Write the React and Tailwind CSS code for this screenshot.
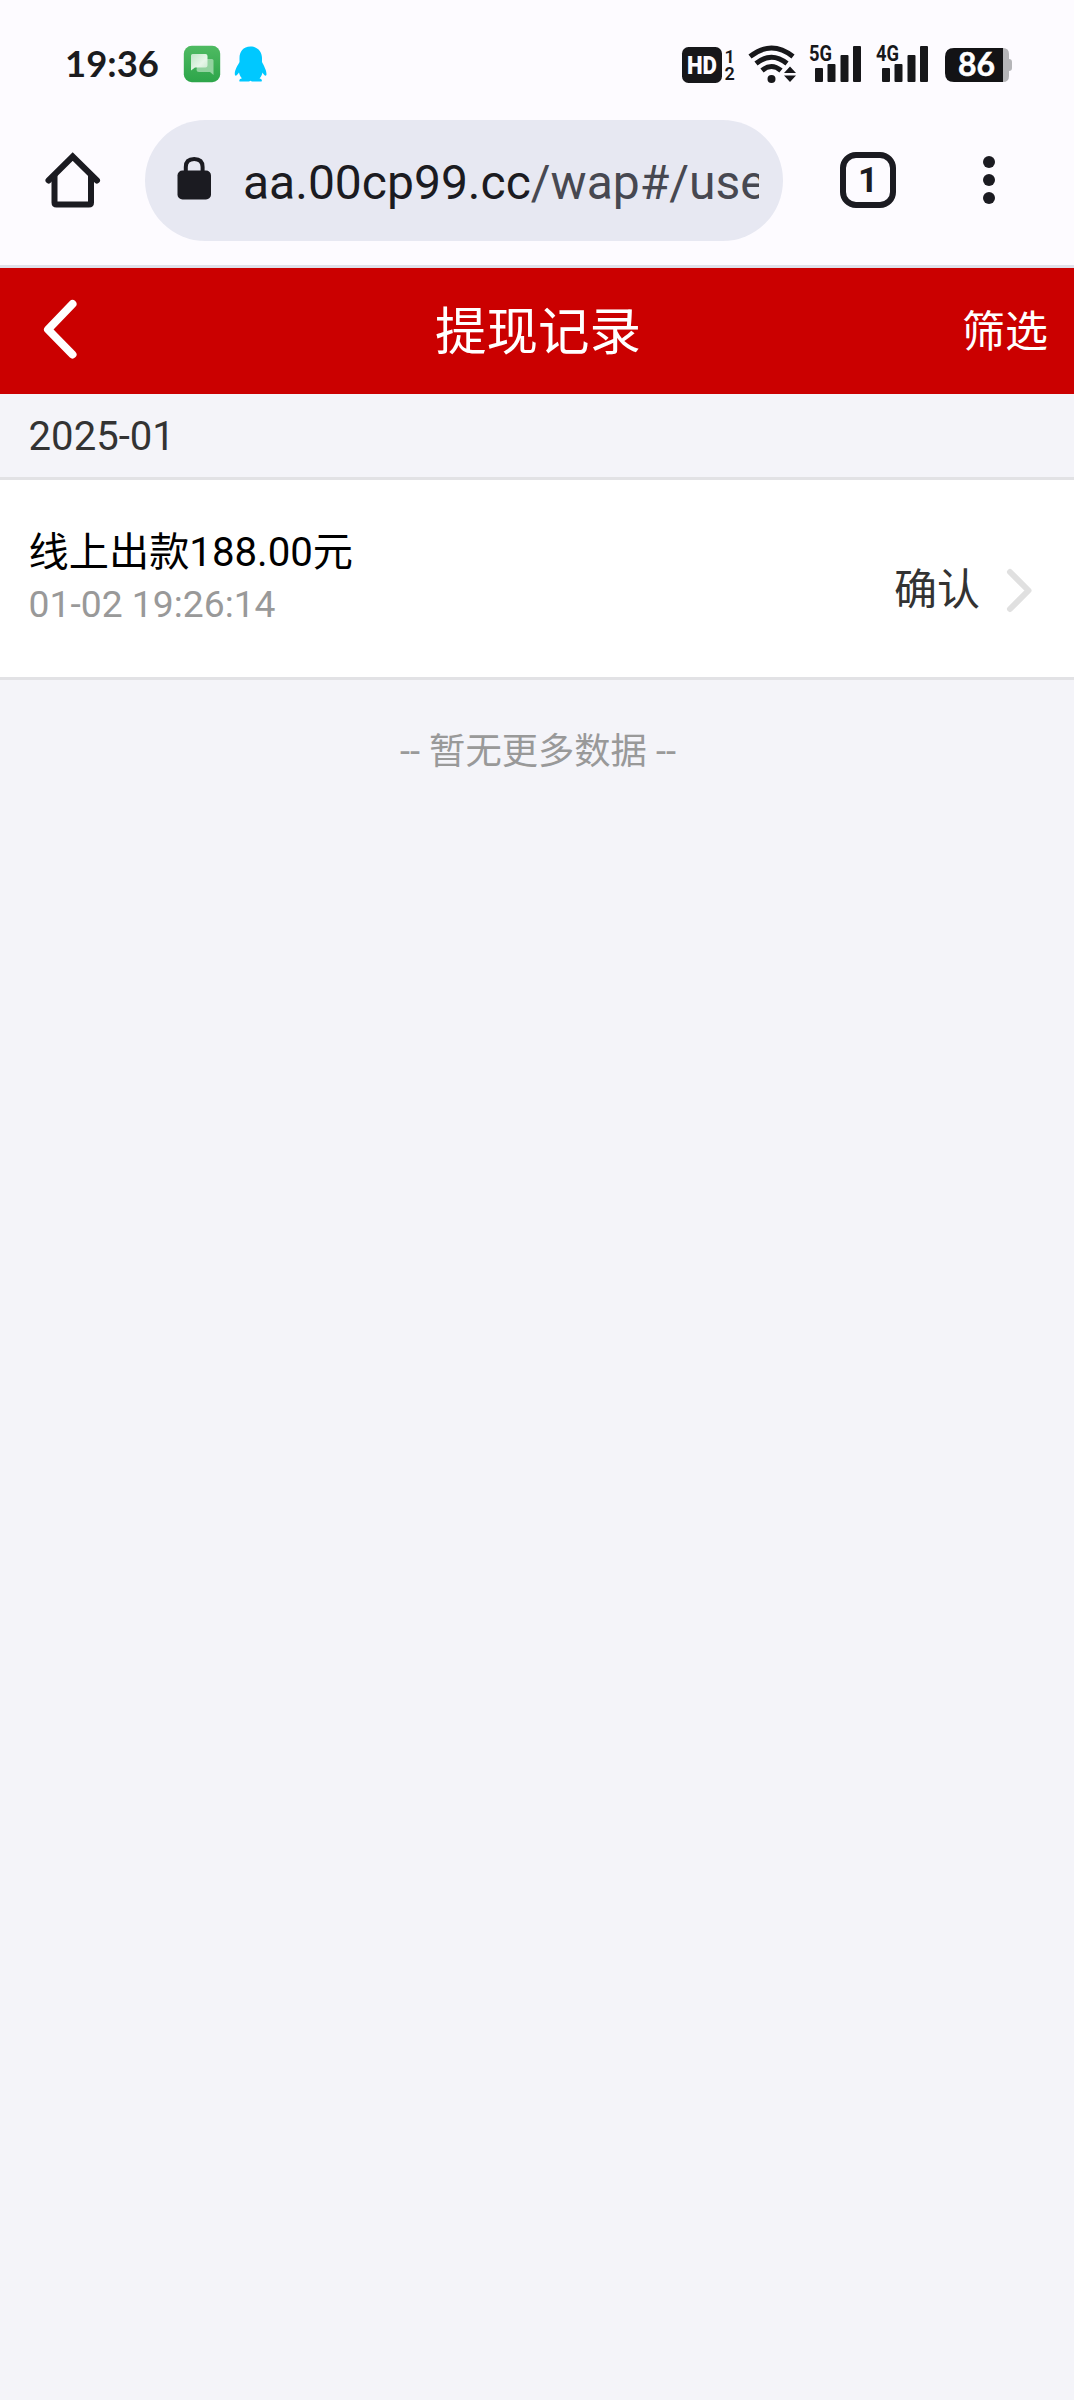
import React from "react";

const ROBOTO = "font-['Roboto','Noto_Sans_CJK_SC',sans-serif]";

function Signal({ label }) {
  return (
    <svg className="overflow-visible" width="54" height="40" viewBox="0 0 54 40" fill="#17171a">
      <text x="0" y="17" fontFamily="Roboto, sans-serif" fontWeight="700" fontSize="22" textLength="23" lengthAdjust="spacingAndGlyphs">{label}</text>
      <rect x="6" y="24" width="8" height="14" rx="1" />
      <rect x="18.500" y="20" width="8" height="18" rx="1" />
      <rect x="31.500" y="11" width="8" height="27" rx="1" />
      <rect x="44" y="2" width="8" height="36" rx="1" />
    </svg>
  );
}

function StatusBar() {
  return (
    <div className="flex h-[120px] items-start pl-[65px] pt-[44px]">
      <div className="h-[40px] w-[118px]">
        <svg className="overflow-visible" width="110" height="40" viewBox="0 0 110 40">
          <text x="0" y="33" fontFamily="Lato, sans-serif" fontWeight="700" fontSize="37" fill="#1b1b1e" textLength="94" lengthAdjust="spacingAndGlyphs">19:36</text>
        </svg>
      </div>
      <svg width="38" height="40" viewBox="0 0 38 40">
        <defs>
          <linearGradient id="chatBg" x1="0" y1="0" x2="0" y2="1">
            <stop offset="0" stopColor="#4fba62" />
            <stop offset="1" stopColor="#2da54a" />
          </linearGradient>
          <linearGradient id="bubble" x1="0" y1="0" x2="1" y2="1">
            <stop offset="0" stopColor="#bfe6c6" />
            <stop offset=".6" stopColor="#e7f6e9" />
            <stop offset="1" stopColor="#c7e9cd" />
          </linearGradient>
        </defs>
        <rect x=".8" y="1.800" width="36.400" height="36.400" rx="8" fill="url(#chatBg)" />
        <path d="M15 15H29Q30.500 15 30.500 16.500V31L27 28H16Q13.500 28 13.500 26Z" fill="#93d3a0" />
        <path d="M9.500 10H22.500Q24.500 10 24.500 12V21.500Q24.500 23.500 22.500 23.500H12L8 26.500V11.500Q8 10 9.500 10Z" fill="url(#bubble)" />
      </svg>
      <svg className="ml-[13px]" width="34" height="40" viewBox="0 0 34 40" fill="#00c8ff">
        <path d="M16.500 2.500C9 2.500 5.500 8 5.500 14V18C4 21 .5 26 .8 30C1 33 3 31.500 5 28.500C5.500 31 6.500 33 8 34.200C5.500 35 5 36 5.500 37.500H15L16.500 36.800L18 37.500H27.500C28.500 36 27.500 35 25.500 34.200C27 33 28 31 28.500 28.500C30 31.500 32.500 33 32.500 30C32.500 26 29.500 21 28 18V14C28 8 24 2.500 16.500 2.500Z" />
      </svg>
      <svg className="ml-[413px] overflow-visible" width="54" height="40" viewBox="0 0 54 40" fill="#17171a">
        <rect x="1" y="3" width="40" height="36" rx="6.500" />
        <text x="6" y="30.300" fontFamily="Roboto, sans-serif" fontWeight="900" fontSize="26.500" fill="#fdfbff" textLength="30" lengthAdjust="spacingAndGlyphs">HD</text>
        <text x="43.500" y="18.500" fontFamily="Roboto, sans-serif" fontWeight="600" fontSize="18">1</text>
        <text x="43.500" y="36" fontFamily="Roboto, sans-serif" fontWeight="600" fontSize="18">2</text>
      </svg>
      <svg className="ml-[12px]" width="50" height="40" viewBox="0 0 50 40" fill="none" stroke="#17171a" strokeWidth="5">
        <path d="M3 12.500Q24.500 -4.500 46 12.500" />
        <path d="M9 19.500Q24.500 7 40 19.500" />
        <path d="M15 26.500Q24.500 18.500 34 26.500" />
        <circle cx="24.500" cy="35" r="4" fill="#17171a" stroke="none" />
        <path d="M37 29L43 22.500L49 29ZM37 31.500L43 38L49 31.500Z" fill="#17171a" stroke="none" />
      </svg>
      <div className="ml-[12px]"><Signal label="5G" /></div>
      <div className="ml-[13px]"><Signal label="4G" /></div>
      <svg className="ml-[14px]" width="70" height="40" viewBox="0 0 70 40">
        <path d="M54 4H59Q65 4 65 10V15Q68 15 68 18V24Q68 27 65 27V32Q65 38 59 38H54Z" fill="#b5b5b8" />
        <path d="M10 4H59V38H10Q1 38 1 29V13Q1 4 10 4Z" fill="#131315" />
        <text x="14" y="32" fontFamily="Lato, sans-serif" fontWeight="700" fontSize="31.500" fill="white" stroke="white" strokeWidth=".5" textLength="37" lengthAdjust="spacingAndGlyphs">86</text>
      </svg>
    </div>
  );
}

function AddressBar() {
  return (
    <div className="flex h-[145px] items-start">
      <svg className="ml-[45px] mt-[32px]" width="56" height="56" viewBox="0 0 56 56" fill="none" stroke="#1b1b21" strokeWidth="6">
        <path d="M3.500 28.500L27.700 4.500L52 28.500" strokeLinecap="round" />
        <path d="M9.500 23V50.500Q9.500 52.500 11.500 52.500H44Q46 52.500 46 50.500V23" />
      </svg>
      <div className="ml-[44px] flex h-[121px] w-[638px] items-center rounded-full bg-[#e7e8f2]">
        <svg className="mb-[5px] ml-[32px]" width="35" height="44" viewBox="0 0 35 44">
          <rect x=".5" y="14.500" width="33.500" height="29" rx="5" fill="#1b1b21" />
          <path d="M8.800 16V11Q8.800 3 17.200 3Q25.600 3 25.600 11V16" fill="none" stroke="#1b1b21" strokeWidth="4" />
        </svg>
        <div className="ml-[31px] mt-[4px] w-[516px] overflow-hidden whitespace-nowrap font-['Roboto',sans-serif] text-[48px] leading-[70px] text-[#1b1b21]">
          aa.00cp99.cc<span className="text-[#474851]">/wap#/use</span>
        </div>
      </div>
      <div className="ml-[57px] mt-[32px] flex h-[56px] w-[56px] items-center justify-center rounded-[16px] border-[6px] border-[#1b1b21] font-['Roboto',sans-serif] text-[35px] font-bold leading-none text-[#1b1b21]">
        1
      </div>
      <div className="ml-[87px] mt-[36px] flex flex-col gap-[6px]">
        <i className="h-[12px] w-[12px] rounded-full bg-[#1b1b21]" />
        <i className="h-[12px] w-[12px] rounded-full bg-[#1b1b21]" />
        <i className="h-[12px] w-[12px] rounded-full bg-[#1b1b21]" />
      </div>
    </div>
  );
}

export default function App() {
  return (
    <div className={`h-[2400px] w-[1074px] overflow-hidden bg-[#f4f4f9] ${ROBOTO}`}>
      <div className="h-[268px] border-b-[3px] border-[#dfe1ea] bg-[#fdfbff]">
        <StatusBar />
        <AddressBar />
      </div>
      <header className="grid h-[126px] grid-cols-[1fr_auto_1fr] items-center bg-[#cb0000] text-white">
        <svg className="mb-[4px] ml-[43px]" width="34" height="60" viewBox="0 0 34 60" fill="none" stroke="white" strokeWidth="8" strokeLinecap="round" strokeLinejoin="round">
          <path d="M29.500 5L5 30.500L29.500 55.500" />
        </svg>
        <h1 className="pl-[2px] pt-[3px] text-[51.500px] leading-[70px]">提现记录</h1>
        <button className="mr-[26px] justify-self-end pt-[1px] text-[43px] leading-[60px]">筛选</button>
      </header>
      <div className="flex h-[86px] items-center border-b-[3px] border-[#e2e2e5] pl-[28.600px] pt-[4px] text-[40.100px] text-[#333333]">2025-01</div>
      <div className="flex h-[200px] items-start justify-between border-b-[3px] border-[#e2e2e5] bg-white">
        <div className="pl-[28.600px] pt-[44px]">
          <div className="text-[40.200px] leading-[58px] text-black">线上出款188.00元</div>
          <div className="-mt-[4px] text-[37.250px] leading-[52px] text-[#999999]">01-02 19:26:14</div>
        </div>
        <div className="flex items-center pr-[40px] pt-[80px]">
          <span className="text-[43px] leading-[60px] text-[#333333]">确认</span>
          <svg className="ml-[25px] mr-px mt-[1px]" width="28" height="46" viewBox="0 0 28 46" fill="none" stroke="#e0e0e0" strokeWidth="6" strokeLinecap="round" strokeLinejoin="round">
            <path d="M5 4L23.500 22.500L5 41" />
          </svg>
        </div>
      </div>
      <p className="mt-[45px] pl-[2px] text-center text-[36.300px] leading-[54px] text-[#999999]">-- 暂无更多数据 --</p>
    </div>
  );
}
